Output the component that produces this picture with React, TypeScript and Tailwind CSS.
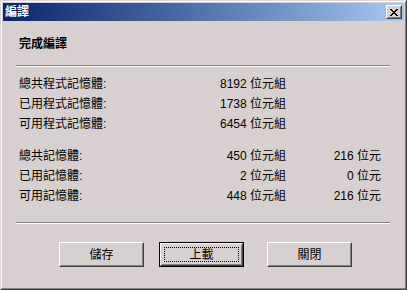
import React from "react";

const font = "font-['Liberation_Sans','Noto_Sans_CJK_TC',sans-serif]";

function Row({ label, v1, v2 }: { label: string; v1: string; v2?: string }) {
  return (
    <div className="flex h-[20px] items-center pl-[16px] text-[12px] leading-[14px] text-black">
      <div className="w-[160px] whitespace-nowrap">{label}</div>
      <div className="w-[107px] text-right whitespace-nowrap">{v1}</div>
      <div className="w-[95px] text-right whitespace-nowrap">{v2 ?? ""}</div>
    </div>
  );
}

function Sep() {
  return (
    <div className="ml-[13px] w-[374px] flex flex-col">
      <div className="h-px bg-[#808080]" />
      <div className="h-px bg-white" />
    </div>
  );
}

function Btn({ label, def, className }: { label: string; def?: boolean; className?: string }) {
  if (def) {
    return (
      <div className={"w-[85px] h-[25px] border border-black " + (className ?? "")}>
        <div className="w-full h-full border border-t-white border-l-white border-r-[#404040] border-b-[#404040]">
          <div className="w-full h-full border border-t-[#d8d0d0] border-l-[#d8d0d0] border-r-[#808080] border-b-[#808080] p-[2px]">
            <div className="w-full h-full border border-dotted border-black flex items-center justify-center text-[12px] leading-[14px]">
              {label}
            </div>
          </div>
        </div>
      </div>
    );
  }
  return (
    <div className={"w-[85px] h-[25px] border border-t-white border-l-white border-r-[#404040] border-b-[#404040] " + (className ?? "")}>
      <div className="w-full h-full border border-t-[#d8d0d0] border-l-[#d8d0d0] border-r-[#808080] border-b-[#808080] flex items-center justify-center text-[12px] leading-[14px]">
        {label}
      </div>
    </div>
  );
}

export default function App() {
  return (
    <div className={"w-[407px] h-[290px] " + font}>
      <div className="w-full h-full border border-t-[#dcd6d6] border-l-[#dcd6d6] border-r-[#404040] border-b-[#404040]">
        <div className="w-full h-full border border-t-white border-l-white border-r-[#808080] border-b-[#808080] bg-[#d8d0d0] p-px flex flex-col">
          <div className="h-[18px] flex items-center bg-gradient-to-r from-[#0a246a] to-[#a6caf0] pl-[2px] pr-[2px]">
            <span className="text-white text-[12px] font-bold leading-[14px]">編譯</span>
            <div className="ml-auto w-[16px] h-[14px] bg-[#d8d0d0] border border-t-white border-l-white border-r-[#404040] border-b-[#404040]">
              <div className="w-full h-full border border-t-[#d8d0d0] border-l-[#d8d0d0] border-r-[#808080] border-b-[#808080] flex items-center justify-center">
                <svg width="8" height="7" viewBox="0 0 8 7" shapeRendering="crispEdges">
                  <path d="M0 0h2v1h-2zM6 0h2v1h-2zM1 1h2v1h-2zM5 1h2v1h-2zM2 2h4v1h-4zM3 3h2v1h-2zM2 4h4v1h-4zM1 5h2v1h-2zM5 5h2v1h-2zM0 6h2v1h-2zM6 6h2v1h-2z" fill="#000" />
                </svg>
              </div>
            </div>
          </div>

          <div className="mt-[16px] pl-[16px] text-[12px] leading-[14px] font-bold text-black">完成編譯</div>
          <div className="mt-[14px]"><Sep /></div>

          <div className="mt-[7px]">
            <Row label="總共程式記憶體:" v1="8192 位元組" />
            <Row label="已用程式記憶體:" v1="1738 位元組" />
            <Row label="可用程式記憶體:" v1="6454 位元組" />
          </div>

          <div className="mt-[12px]">
            <Row label="總共記憶體:" v1="450 位元組" v2="216 位元" />
            <Row label="已用記憶體:" v1="2 位元組" v2="0 位元" />
            <Row label="可用記憶體:" v1="448 位元組" v2="216 位元" />
          </div>

          <div className="mt-[16px]"><Sep /></div>

          <div className="mt-[18px] flex text-black">
            <Btn label="儲存" className="ml-[56px]" />
            <Btn label="上載" def className="ml-[15px]" />
            <Btn label="關閉" className="ml-[23px]" />
          </div>
        </div>
      </div>
    </div>
  );
}
